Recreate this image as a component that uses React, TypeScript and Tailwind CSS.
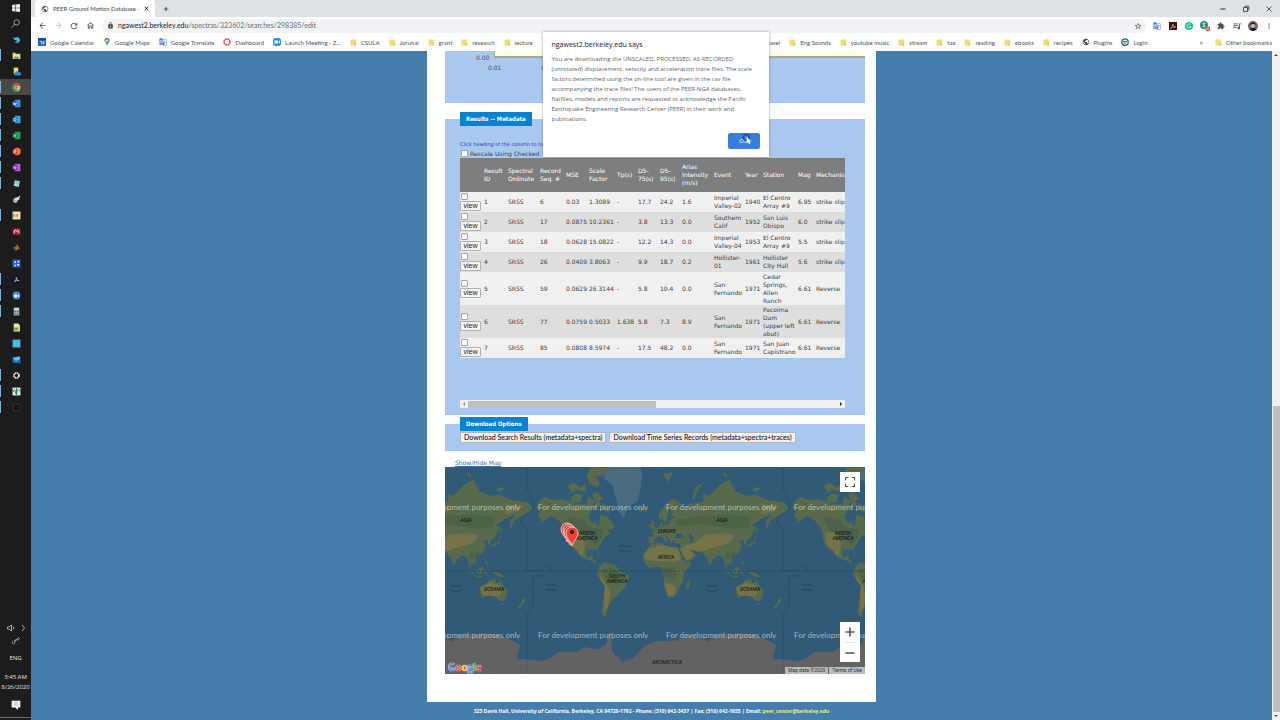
import type { ReactNode } from "react";
import {
  MdAdd,
  MdArrowBack,
  MdArrowForward,
  MdClose,
  MdExtension,
  MdGTranslate,
  MdLock,
  MdMoreVert,
  MdOutlineHome,
  MdPublic,
  MdQueueMusic,
  MdRefresh,
  MdStarBorder,
} from "react-icons/md";

/* ---------- taskbar ---------- */

type Task = { name: string; icon: ReactNode; open?: boolean; active?: boolean };

function Tile({ color, side, children }: { color: string; side?: string; children?: ReactNode }) {
  return (
    <>
      <rect x="5" y="1.5" width="10" height="13" rx="1" fill={side ?? color} />
      <rect x="1" y="4" width="8.5" height="8.5" rx="1" fill={color} />
      <g stroke="#fff" strokeWidth="1.2" fill="none">
        {children}
      </g>
    </>
  );
}

const tasks: Task[] = [
  {
    name: "Bird",
    icon: <path d="M1 4c4 2 5 0 8 0 4 0 6 3 5 6-1 4-6 5-11 3 4 0 6-1 6-3C6 10 3 8 1 4z" fill="#4fb3e8" />,
  },
  {
    name: "File Explorer",
    open: true,
    icon: (
      <>
        <path d="M1 3h5l1 2h8v9H1z" fill="#e8b640" />
        <path d="M2 6h12v7H2z" fill="#fbe08a" />
        <path d="M4 10h8v4H4z" fill="#4a9bd8" />
      </>
    ),
  },
  {
    name: "OneDrive Files",
    icon: (
      <>
        <path d="M3 1h8v11H3z" fill="#f4d35e" />
        <path d="M5 15a3 3 0 0 1 0-5 4 4 0 0 1 7-1 3 3 0 0 1 2 6z" fill="#1e8fe0" />
      </>
    ),
  },
  {
    name: "Chrome",
    open: true,
    active: true,
    icon: (
      <>
        <circle cx="8" cy="8" r="7" fill="#e5b62c" />
        <path d="M8 8 2 4.500A7 7 0 0 1 14 4.500z" fill="#d9473b" />
        <path d="M8 8 2 4.500A7 7 0 0 0 8 15l3-6z" fill="#3c9a52" />
        <circle cx="8" cy="8" r="3.200" fill="#fff" />
        <circle cx="8" cy="8" r="2.400" fill="#4285f4" />
      </>
    ),
  },
  {
    name: "Word",
    open: true,
    icon: (
      <Tile color="#1d5fc4" side="#3f8ee8">
        <path d="m2.500 6 1.300 4.500L5.200 7l1.400 3.500L8 6" />
      </Tile>
    ),
  },
  {
    name: "Outlook",
    open: true,
    icon: (
      <Tile color="#0f6cbd" side="#38a9ea">
        <circle cx="5.300" cy="8.300" r="2.200" />
      </Tile>
    ),
  },
  {
    name: "Excel",
    open: true,
    icon: (
      <Tile color="#107c41" side="#21a366">
        <path d="m3.300 6 4 4.600m0-4.600-4 4.600" />
      </Tile>
    ),
  },
  {
    name: "PowerPoint",
    open: true,
    icon: (
      <>
        <circle cx="9" cy="8" r="6.500" fill="#ee7850" />
        <rect x="1" y="4" width="8.500" height="8.500" rx="1" fill="#c43e1c" />
        <path d="M4 11V6h2a1.500 1.500 0 0 1 0 3H4" stroke="#fff" strokeWidth="1.200" fill="none" />
      </>
    ),
  },
  {
    name: "OneNote",
    open: true,
    icon: (
      <Tile color="#7719aa" side="#b45cdc">
        <path d="M3.500 10.500V6l3.500 4.500V6" />
      </Tile>
    ),
  },
  {
    name: "Notepad",
    open: true,
    icon: (
      <>
        <path d="m5 2 9 2-2 10-9-2z" fill="#a8dbe2" />
        <path d="m6 5 6 1M5.500 8l6 1" stroke="#4e8f9b" />
      </>
    ),
  },
  {
    name: "Paint",
    icon: (
      <>
        <path d="M2 10c0-4 4-6 8-6 4 0 5 4 1 5-2 0-1 2-2 4-3 2-7 0-7-3z" fill="#ccc8c0" />
        <path d="m8 8 6-6" stroke="#e8e8e8" strokeWidth="2" />
        <circle cx="5" cy="10" r="1" fill="#777" />
      </>
    ),
  },
  {
    name: "MathType",
    open: true,
    icon: (
      <>
        <rect x="1" y="1" width="14" height="14" fill="#f3e5b4" />
        <path d="M3 12V5l4 5 3-5v7" stroke="#a8842b" strokeWidth="1.500" fill="none" />
      </>
    ),
  },
  {
    name: "Mendeley",
    icon: (
      <>
        <rect x="1" y="2" width="14" height="12" rx="1" fill="#a51d36" />
        <path d="M4 11V7c1-2 3-2 4 1 1-3 3-3 4-1v4" stroke="#fff" strokeWidth="1.600" fill="none" />
      </>
    ),
  },
  {
    name: "MATLAB",
    icon: (
      <>
        <path d="m1 9 4-2 4-5-3 9z" fill="#3d7ab5" />
        <path d="M9 2c2 1 3 7 6 10l-4-2-4 4-2-2c3-2 3-7 4-10z" fill="#d9622b" />
      </>
    ),
  },
  {
    name: "Diagram",
    icon: (
      <>
        <rect x="1" y="1" width="14" height="14" fill="#2159d1" />
        <path d="M4 4h3v3H4zM10 3h3v3h-3zM4 10h3v3H4zM9 9h4v3H9z" fill="#e2ecff" />
      </>
    ),
  },
  {
    name: "Acrobat",
    open: true,
    icon: (
      <>
        <rect x="1" y="1" width="14" height="14" fill="#101828" />
        <path d="M4 12c3-2 4-5 3.500-8 1 4 2 6 5 6-3-.500-6 0-8.500 2z" stroke="#fff" fill="none" />
      </>
    ),
  },
  {
    name: "Zoom",
    open: true,
    icon: (
      <>
        <circle cx="8" cy="8" r="7" fill="#3f8cf0" />
        <path d="M4 6h5v5H4zM10 7.500l2.500-1.500v5L10 9.500z" fill="#fff" />
      </>
    ),
  },
  {
    name: "Calculator",
    open: true,
    icon: (
      <>
        <path d="M3 1h10v14H3z" fill="#9aa9b5" />
        <path d="M4 2h8v3H4z" fill="#dfe7ec" />
        <path d="M5 7h2v2H5zM9 7h2v2H9zM5 11h2v2H5zM9 11h2v2H9z" fill="#3f5463" />
      </>
    ),
  },
  {
    name: "Notes",
    icon: (
      <>
        <path d="M3 1h8l3 3v11H3z" fill="#d7e8b0" />
        <path d="M4 8h7v5H4z" fill="#6ca52e" />
      </>
    ),
  },
  { name: "Sticky", icon: <rect x="1" y="1" width="14" height="14" fill="#49b6e4" /> },
  {
    name: "Mail",
    icon: (
      <>
        <path d="M1 5h14v9H1z" fill="#1374c8" />
        <path d="m1 5 13-3v5L7 11z" fill="#69b9f2" />
      </>
    ),
  },
  {
    name: "Settings",
    open: true,
    icon: <circle cx="8" cy="8" r="4.500" fill="none" stroke="#f2f2f2" strokeWidth="3" strokeDasharray="2.800 0.730" />,
  },
  {
    name: "Plots",
    open: true,
    icon: (
      <>
        <rect x="1" y="1" width="14" height="14" fill="#dcefe2" />
        <path d="M2 9c2-6 3-6 4 0s2 5 3-1 3-4 5 0M8 2v12" stroke="#1f6b42" strokeWidth="1.500" fill="none" />
      </>
    ),
  },
  {
    name: "Console",
    open: true,
    icon: <rect x="2" y="2" width="12" height="12" rx="1" fill="#151515" stroke="#4a4a4a" />,
  },
];

function Taskbar() {
  return (
    <aside className="flex w-[31px] shrink-0 flex-col items-center bg-[#1c1c1c] font-['Open_Sans',sans-serif] text-[6px] leading-[10px] text-[#e4e4e4]">
      <button aria-label="Start" className="flex h-[15px] w-full items-center justify-center">
        <svg viewBox="0 0 16 16" className="size-2" fill="#f2f2f2">
          <path d="M0 2.200 7 1v6.500H0zM8 .9 16 0v7.500H8zM0 8.500h7V15l-7-1.200zM8 8.500h8V16l-8-.9z" />
        </svg>
      </button>
      <button aria-label="Search" className="flex h-4 w-full items-center justify-center">
        <svg viewBox="0 0 16 16" className="size-[9px]" fill="none" stroke="#c8c8c8" strokeWidth="1.300">
          <circle cx="10" cy="6" r="4.800" />
          <path d="m6.500 9.500-5.500 6" />
        </svg>
      </button>
      {tasks.map((t) => (
        <button
          key={t.name}
          aria-label={t.name}
          className={`flex h-4 w-full items-center ${t.active ? "bg-[#484848]" : ""}`}
        >
          <span className={`h-3 w-px ${t.open ? "bg-[#7db4dc]" : ""}`} />
          <span className="flex flex-1 justify-center">
            <svg viewBox="0 0 16 16" className="size-[9px]">
              {t.icon}
            </svg>
          </span>
        </button>
      ))}
      <div className="mt-auto flex w-full flex-col items-center">
        <svg viewBox="0 0 60 24" className="h-3 w-[30px]" fill="none" stroke="#b8b8b8" strokeWidth="1.800">
          <path d="M13 10h3l5-4v12l-5-4h-3zM24 9c2 2 2 4 0 6" />
          <path d="m42 6 5 6-5 6" />
        </svg>
        <svg viewBox="0 0 16 16" className="mt-[2px] size-[9px]" fill="none" stroke="#b8b8b8" strokeWidth="1.400">
          <path d="m6 10 8-8M4 9a2.500 2.500 0 1 0 3 3L7 7h6l2-3" />
        </svg>
        <span className="mt-2">ENG</span>
        <span className="mt-[9px]">3:45 AM</span>
        <span>8/26/2020</span>
        <svg viewBox="0 0 16 16" className="mt-2 size-[10px]" fill="#f5f5f5">
          <path d="M1 1h14v11h-4v4l-4-4H1z" />
          <path d="M4 5h8M4 8h8" stroke="#999" />
        </svg>
        <div className="mt-[7px] mb-[2px] h-px w-full bg-[#6a6a6a]" />
      </div>
    </aside>
  );
}

/* ---------- browser chrome ---------- */

function TabStrip() {
  return (
    <div className="flex h-[17px] items-center bg-[#dee1e6] pl-1">
      <div className="flex h-full w-[120px] items-center rounded-t-[3px] bg-white pr-[5px] pl-[6px]">
        <MdPublic className="size-2 text-[#5a5e63]" />
        <span className="ml-1 flex-1 overflow-hidden font-[Lato,sans-serif] text-[6px] whitespace-nowrap text-[#45494d]">
          PEER Ground Motion Database -
        </span>
        <button aria-label="Close tab">
          <MdClose className="size-[7px]" />
        </button>
      </div>
      <button aria-label="New tab" className="ml-[7px]">
        <MdAdd className="size-2" />
      </button>
      <div className="mr-[7px] ml-auto flex items-center gap-[15px] text-[#333]">
        <button aria-label="Minimize">
          <svg viewBox="0 0 8 8" className="size-2" fill="none" stroke="currentColor">
            <path d="M1.500 4h5" />
          </svg>
        </button>
        <button aria-label="Restore">
          <svg viewBox="0 0 8 8" className="size-2" fill="none" stroke="currentColor" strokeWidth=".8">
            <path d="M1.500 2.500h4v4h-4zM3 2.500V1.200h3.700V5H5.500" />
          </svg>
        </button>
        <button aria-label="Close">
          <svg viewBox="0 0 8 8" className="size-2" fill="none" stroke="currentColor" strokeWidth=".8">
            <path d="m1.500 1.500 5 5m0-5-5 5" />
          </svg>
        </button>
      </div>
    </div>
  );
}

function ToolButton({ label, children }: { label: string; children: ReactNode }) {
  return (
    <button aria-label={label} className="flex w-4 shrink-0 items-center justify-center">
      {children}
    </button>
  );
}

function Toolbar() {
  return (
    <div className="flex h-[17px] items-center bg-white pr-[3px] pl-[3px] text-[#4a4d51]">
      <ToolButton label="Back">
        <MdArrowBack className="size-[9px]" />
      </ToolButton>
      <ToolButton label="Forward">
        <MdArrowForward className="size-[9px] text-[#b4b7ba]" />
      </ToolButton>
      <ToolButton label="Reload">
        <MdRefresh className="size-[10px]" />
      </ToolButton>
      <ToolButton label="Home">
        <MdOutlineHome className="size-[9px]" />
      </ToolButton>
      <div className="mr-[3px] ml-1 flex h-[14px] flex-1 items-center rounded-full bg-[#f1f3f4] pl-[5px]">
        <MdLock className="size-[7px]" />
        <span className="ml-1 flex-1 font-[Lato,sans-serif] text-[7px] text-[#6a6e72]">
          <span className="text-[#1f2226]">ngawest2.berkeley.edu</span>/spectras/323602/searches/298385/edit
        </span>
        <ToolButton label="Bookmark">
          <MdStarBorder className="size-2" />
        </ToolButton>
      </div>
      <ToolButton label="Translate">
        <MdGTranslate className="size-2 text-[#4a80dc]" />
      </ToolButton>
      <ToolButton label="PDF">
        <svg viewBox="0 0 16 16" className="size-2">
          <rect width="16" height="16" fill="#47110d" />
          <path d="M3 13c4-3 5-6 4.500-9 1 4 2 6 6 6-4-.500-7 .500-10.500 3z" stroke="#fff" fill="none" />
        </svg>
      </ToolButton>
      <ToolButton label="Grammar">
        <svg viewBox="0 0 16 16" className="size-2">
          <circle cx="8" cy="8" r="8" fill="#15c39a" />
          <path d="M11 5a4 4 0 1 0 1 4H9" stroke="#fff" strokeWidth="1.500" fill="none" />
        </svg>
      </ToolButton>
      <ToolButton label="Shopping">
        <svg viewBox="0 0 20 20" className="size-[10px]">
          <circle cx="8" cy="8" r="8" fill="#178b7c" />
          <path d="M11 5c-6-3-7 2-3 3s2 5-3 3" stroke="#fff" strokeWidth="2" fill="none" />
          <rect x="11" y="11" width="9" height="9" rx="2" fill="#dd4b43" />
          <path d="M14 13.500h3v4h-3z" stroke="#fff" fill="none" />
        </svg>
      </ToolButton>
      <ToolButton label="Extensions">
        <MdExtension className="size-2" />
      </ToolButton>
      <ToolButton label="Playlist">
        <MdQueueMusic className="size-[10px]" />
      </ToolButton>
      <ToolButton label="Profile">
        <svg viewBox="0 0 20 20" className="size-[10px]">
          <circle cx="10" cy="10" r="10" fill="#6e6a68" />
          <path d="M3 17c1-4 13-4 14 0a10 10 0 0 1-14 0z" fill="#1d1d20" />
          <ellipse cx="10" cy="9" rx="4" ry="5" fill="#d9b39a" />
          <path d="M5 8c0-7 10-7 10 0-2-3-8-3-10 0z" fill="#1c1512" />
        </svg>
      </ToolButton>
      <ToolButton label="Menu">
        <MdMoreVert className="size-2" />
      </ToolButton>
    </div>
  );
}

function Folder() {
  return (
    <svg viewBox="0 0 8 8" className="h-[7px] w-[7px] shrink-0">
      <rect x=".500" y=".500" width="6.500" height="7" rx=".600" fill="#f9d975" />
      <path d="M5 4.500h2v3H5z" fill="#efc64f" />
    </svg>
  );
}

const calendarIcon = (
  <svg viewBox="0 0 16 16" className="size-2">
    <rect width="16" height="16" rx="1" fill="#2b5fc9" />
    <path d="M0 0h16v4H0z" fill="#1c47a0" />
    <path d="M4 7h3v5M10 7h2v5h-2z" stroke="#fff" strokeWidth="1.300" fill="none" />
  </svg>
);

const mapsIcon = (
  <svg viewBox="0 0 16 16" className="size-2">
    <path d="M8 16C7 11 3 9 3 5a5 5 0 0 1 10 0c0 4-4 6-5 11z" fill="#34a853" />
    <path d="M8 0a5 5 0 0 0-5 5l5 0z" fill="#ea4335" />
    <path d="M8 0a5 5 0 0 1 5 5l-5 0z" fill="#4285f4" />
    <path d="M3 5c0 2 1 3 2 5l4-5z" fill="#fbbc04" />
    <circle cx="8" cy="5" r="1.800" fill="#fff" />
  </svg>
);

const dashboardIcon = (
  <svg viewBox="0 0 16 16" className="size-2">
    <circle cx="8" cy="8" r="6" fill="none" stroke="#d9383a" strokeWidth="3" strokeDasharray="3.500 1.200" />
  </svg>
);

const zoomIcon = (
  <svg viewBox="0 0 16 16" className="size-2">
    <rect width="16" height="16" rx="5" fill="#2d8cff" />
    <path d="M3 5h7v6H3zM11 7l3-2v6l-3-2z" fill="#fff" />
  </svg>
);

const loginIcon = (
  <svg viewBox="0 0 16 16" className="size-2">
    <circle cx="8" cy="8" r="6.500" fill="#e3efd9" stroke="#2c6a78" strokeWidth="2.500" />
    <path d="M4 7h8M8 7v5" stroke="#3d8a4a" strokeWidth="2" />
  </svg>
);

function Bookmark({ label, icon }: { label: string; icon?: ReactNode }) {
  return (
    <a href="#" className="flex shrink-0 items-center gap-1">
      {icon ?? <Folder />}
      {label}
    </a>
  );
}

function BookmarksBar() {
  return (
    <nav className="flex h-[17px] items-center bg-white pr-2 pb-px pl-[7px] font-[Lato,sans-serif] text-[6px] whitespace-nowrap text-[#4d5156]">
      <div className="flex gap-[9px]">
        <Bookmark label="Google Calendar" icon={calendarIcon} />
        <Bookmark label="Google Maps" icon={mapsIcon} />
        <Bookmark label="Google Translate" icon={<MdGTranslate className="size-2 text-[#4a80dc]" />} />
        <Bookmark label="Dashboard" icon={dashboardIcon} />
        <Bookmark label="Launch Meeting - Z..." icon={zoomIcon} />
        {["CSULA", "Jorunal", "grant", "research", "lecture"].map((b) => (
          <Bookmark key={b} label={b} />
        ))}
      </div>
      <div className="ml-auto flex gap-[9px]">
        {["travel", "Eng Sounds", "youtube music", "stream", "tax", "reading", "ebooks", "recipes"].map((b) => (
          <Bookmark key={b} label={b} />
        ))}
        <Bookmark label="Plugins" icon={<MdPublic className="size-2 text-[#3c4043]" />} />
        <Bookmark label="Login" icon={loginIcon} />
      </div>
      <button aria-label="More bookmarks" className="ml-[52px] text-[8px]">
        »
      </button>
      <div className="ml-3">
        <Bookmark label="Other bookmarks" />
      </div>
    </nav>
  );
}

function AlertDialog() {
  return (
    <div
      role="alertdialog"
      aria-labelledby="alert-title"
      className="absolute top-8 left-1/2 flex h-[125px] w-[226px] -translate-x-1/2 flex-col bg-white px-[9px] pt-2 pb-2 shadow-[0_0_3px_rgba(0,0,0,0.35)]"
    >
      <h2 id="alert-title" className="text-[7px] leading-[10px] text-[#202124]">
        ngawest2.berkeley.edu says
      </h2>
      <p className="mt-1 text-[6px] leading-[10px] whitespace-nowrap text-[#5f6368]">
        You are downloading the UNSCALED, PROCESSED, AS-RECORDED
        <br />
        (unrotated) displacement, velocity and acceleration trace files. The scale
        <br />
        factors determined using the on-line tool are given in the csv file
        <br />
        accompanying the trace files! The users of the PEER-NGA databases,
        <br />
        flatfiles, models and reports are requested to acknowledge the Pacific
        <br />
        Earthquake Engineering Research Center (PEER) in their work and
        <br />
        publications.
      </p>
      <button className="relative mt-auto h-4 w-8 self-end rounded-[2px] bg-[#3b7ddd] text-[6px] text-white">
        OK
        <svg viewBox="0 0 16 16" className="absolute top-0 left-[13px] size-3">
          <circle cx="7" cy="6" r="4" fill="none" stroke="#1747a6" strokeWidth="1.800" />
          <path d="M7.500 5v9l2-1.800L11 15l1.500-.7-1.300-2.600H14z" fill="#fff" />
        </svg>
      </button>
    </div>
  );
}

/* ---------- results ---------- */

const columns = [
  { label: "", width: 24 },
  { label: "Result ID", width: 24 },
  { label: "Spectral Ordinate", width: 32 },
  { label: "Record Seq. #", width: 26 },
  { label: "MSE", width: 23 },
  { label: "Scale Factor", width: 28 },
  { label: "Tp(s)", width: 21 },
  { label: "D5-75(s)", width: 22 },
  { label: "D5-95(s)", width: 22 },
  { label: "Arias Intensity (m/s)", width: 32 },
  { label: "Event", width: 31 },
  { label: "Year", width: 18 },
  { label: "Station", width: 35 },
  { label: "Mag", width: 18 },
  { label: "Mechanism", width: 42 },
];

const records = [
  ["1", "SRSS", "6", "0.03", "1.3089", "-", "17.7", "24.2", "1.6", "Imperial Valley-02", "1940", "El Centro Array #9", "6.95", "strike slip"],
  ["2", "SRSS", "17", "0.0875", "10.2361", "-", "3.8", "13.3", "0.0", "Southern Calif", "1952", "San Luis Obispo", "6.0", "strike slip"],
  ["3", "SRSS", "18", "0.0628", "15.0822", "-", "12.2", "14.3", "0.0", "Imperial Valley-04", "1953", "El Centro Array #9", "5.5", "strike slip"],
  ["4", "SRSS", "26", "0.0409", "3.8063", "-", "9.9", "18.7", "0.2", "Hollister-01", "1961", "Hollister City Hall", "5.6", "strike slip"],
  ["5", "SRSS", "59", "0.0629", "26.3144", "-", "5.8", "10.4", "0.0", "San Fernando", "1971", "Cedar Springs, Allen Ranch", "6.61", "Reverse"],
  ["6", "SRSS", "77", "0.0759", "0.5033", "1.638", "5.8", "7.3", "8.9", "San Fernando", "1971", "Pacoima Dam (upper left abut)", "6.61", "Reverse"],
  ["7", "SRSS", "85", "0.0808", "8.5974", "-", "17.5", "48.2", "0.0", "San Fernando", "1971", "San Juan Capistrano", "6.61", "Reverse"],
];

function ResultsTable() {
  return (
    <div className="overflow-hidden">
      <table className="w-[398px] table-fixed text-left text-[6px] leading-[8px] text-[#3c3c3c]">
        <colgroup>
          {columns.map((c) => (
            <col key={c.label} style={{ width: c.width }} />
          ))}
        </colgroup>
        <thead>
          <tr className="h-[34px] bg-[#7e7e7e] text-white">
            {columns.map((c) => (
              <th key={c.label} className="p-0 font-normal">
                {c.label.startsWith("D5") ? (
                  <>
                    D5-
                    <br />
                    {c.label.slice(3)}
                  </>
                ) : (
                  c.label
                )}
              </th>
            ))}
          </tr>
        </thead>
        <tbody>
          {records.map((r) => (
            <tr key={r[0]} className={`${r[11].length > 20 ? "h-[33px]" : "h-5"} odd:bg-[#f0f0f0] even:bg-[#dedede]`}>
              <td className="p-0">
                <div className="flex flex-col items-start gap-px">
                  <input
                    type="checkbox"
                    aria-label={`Select result ${r[0]}`}
                    className="ml-px size-[7px] appearance-none rounded-[1px] border border-[#a4a4a4] bg-white"
                  />
                  <button className="h-[10px] w-[21px] rounded-[1px] border border-[#b0b0b0] bg-[#f4f4f4] font-['Liberation_Sans',sans-serif] text-[7px] leading-[8px] text-[#222]">
                    view
                  </button>
                </div>
              </td>
              {r.map((v, i) => (
                <td key={i} className="p-0">
                  {v}
                </td>
              ))}
            </tr>
          ))}
        </tbody>
      </table>
    </div>
  );
}

function Section({ title, className, children }: { title: string; className: string; children: ReactNode }) {
  return (
    <fieldset className={`min-w-0 bg-[#a9c8f0] pr-5 pl-[15px] ${className}`}>
      <legend className="h-[14px] bg-[#0a82d2] px-[6px] font-['DejaVu_Sans_Condensed','DejaVu_Sans',sans-serif] text-[6px] leading-[14px] font-bold text-white">
        {title}
      </legend>
      {children}
    </fieldset>
  );
}

/* ---------- map ---------- */

type LonLat = [number, number];

// zoom 0 world: 256px per 360 degrees, Greenwich at x=210, equator at y=104
function project([lon, lat]: LonLat) {
  const x = 210 + (lon * 256) / 360;
  const y = 104 - 40.74 * Math.log(Math.tan(Math.PI / 4 + (lat * Math.PI) / 360));
  return `${x.toFixed(1)} ${y.toFixed(1)}`;
}

const shape = (pts: LonLat[]) => `M${pts.map(project).join("L")}Z`;

const land: LonLat[][] = [
  // north america
  [[-168, 66], [-162, 70], [-156, 71.500], [-141, 70], [-128, 70.500], [-115, 68.500], [-108, 68], [-96, 68], [-94, 72], [-86, 69.500], [-82, 69], [-86, 66], [-94, 61], [-92, 57], [-82, 55], [-80, 51.500], [-78, 55], [-77, 62], [-70, 61], [-65, 59], [-56, 53], [-60, 50], [-66, 50], [-64, 46], [-70, 43], [-74, 40], [-76, 35], [-81, 31], [-80, 25.500], [-83, 29], [-90, 29.500], [-97, 27], [-97, 21], [-94, 18], [-90, 21], [-87, 21], [-88, 16], [-83, 15], [-83, 10], [-77, 8.500], [-80, 7.500], [-87, 13], [-95, 16], [-105, 20], [-109, 26], [-114, 31], [-110, 23], [-117, 32], [-122, 36.500], [-124, 42], [-124, 48], [-130, 54], [-137, 58.500], [-147, 61], [-154, 58], [-164, 54.500], [-158, 58], [-165, 61], [-162, 64]],
  // arctic islands
  [[-90, 64], [-82, 66], [-72, 68], [-63, 66], [-65, 62.500], [-74, 65], [-78, 70], [-72, 71], [-82, 73.500], [-89, 73], [-84, 70]],
  [[-118, 69], [-104, 69], [-102, 72.500], [-112, 73], [-118, 71.500]],
  [[-125, 72], [-118, 73.500], [-122, 76], [-115, 77], [-104, 75.500], [-98, 76.500], [-96, 73.500], [-110, 74.500]],
  [[-92, 76.500], [-80, 75.500], [-78, 77], [-84, 79], [-72, 79], [-64, 81], [-90, 81], [-96, 79]],
  // cuba and hispaniola
  [[-84, 22], [-77, 21], [-70, 19], [-74, 19], [-80, 23]],
  // south america
  [[-77, 8], [-72, 12], [-62, 10.500], [-52, 5], [-50, 0], [-44, -3], [-35, -6], [-39, -14], [-41, -22], [-48, -27], [-54, -34], [-58, -35], [-62, -40], [-65, -43], [-67, -48], [-69, -52], [-67, -55], [-73, -53], [-75, -47], [-73, -40], [-71, -30], [-70, -19], [-76, -14], [-81, -6], [-80, 0]],
  // africa
  [[-17, 15], [-16, 23], [-10, 30], [-6, 35.500], [10, 37], [11, 33.500], [20, 31], [24, 32], [33, 31], [36, 23], [39, 16], [43, 12], [51, 12], [48, 5], [41, -2], [39, -8], [40, -15], [35, -21], [32, -28], [27, -34], [19, -35], [15, -27], [12, -17], [13, -7], [9, -1], [9, 4], [4, 6], [-8, 4.500], [-13, 9]],
  [[44, -25], [44, -17], [49, -12.500], [50, -16], [47, -25]],
  // eurasia
  [[-9, 37], [-9, 43], [-2, 43.500], [-4, 48], [2, 51], [8, 54], [8, 57], [11, 56], [11, 54], [20, 55], [23, 59], [30, 60], [22, 61], [25, 65], [21, 65], [17, 61], [16, 57], [13, 56], [11, 59], [6, 58.500], [5, 62], [14, 68], [25, 71], [41, 67], [34, 65], [44, 66], [46, 68], [60, 69], [68, 69], [68, 73], [74, 72], [80, 73], [88, 75.500], [104, 78], [113, 74], [128, 72], [140, 72.500], [160, 70], [180, 69], [189, 66], [180, 63], [170, 60], [163, 58], [157, 51], [156, 57], [163, 62], [150, 59], [136, 54], [141, 52], [135, 43], [128, 39], [129, 35], [126, 35], [124, 40], [118, 39], [122, 36], [121, 30], [117, 24], [108, 21], [109, 13], [105, 9], [100, 13], [103, 2], [98, 9], [97, 17], [91, 22], [86, 20], [80, 15], [79, 8], [75, 12], [72, 20], [67, 25], [57, 26], [50, 30], [48, 30], [52, 24], [59, 22], [54, 17], [44, 12.500], [39, 21], [35, 29], [36, 36], [28, 36.500], [26, 40], [22, 37], [19, 42], [13, 45.500], [18, 40], [16, 38], [8, 44], [3, 43], [-1, 38], [-5, 36]],
  // islands round europe and asia
  [[-5, 50], [1, 51], [0, 53], [-2, 57], [-5, 58.500], [-5, 54]],
  [[-10, 52], [-6, 52.500], [-6, 55], [-9, 54]],
  [[-24, 65.500], [-14, 66.500], [-14, 64.500], [-21, 63.500]],
  [[12, 79.500], [26, 80], [18, 77]],
  [[52, 71], [58, 75.500], [68, 77], [58, 73], [56, 70.500]],
  [[95, 80], [104, 79], [98, 78.500]],
  [[137, 75.500], [150, 75], [141, 73.500]],
  [[130, 32], [137, 34], [141, 36], [141, 42], [145, 43], [142, 45.500], [139, 38], [132, 35]],
  [[142, 46], [144, 50], [142, 54]],
  [[95, 5.500], [104, -2], [106, -6], [101, -2.500]],
  [[109, 1], [117, 7], [119, 2], [116, -4], [110, -3]],
  [[105, -6.500], [114, -7], [120, -9], [108, -8]],
  [[119, -1], [125, 1.500], [122, -5]],
  [[120, 18], [122, 17], [126, 7], [122, 11]],
  [[131, -1], [141, -2.500], [150, -9], [142, -9], [134, -4]],
  // australia and new zealand
  [[114, -22], [122, -18], [127, -14], [131, -12], [136, -12], [135, -15], [140, -17.500], [142, -11], [146, -19], [153, -26], [151, -34], [147, -39], [140, -38], [135, -33], [130, -32], [123, -34], [115, -34.500]],
  [[145, -41], [148, -41], [147, -43.500]],
  [[173, -35], [178, -38], [175, -41.500], [172, -44], [168, -47], [167, -45.500], [173, -41]],
];

const dry: LonLat[][] = [
  [[-16, 17], [-15, 24], [-9, 30], [10, 35], [32, 30], [37, 18], [30, 13], [0, 14]],
  [[13, -17], [18, -33], [27, -32], [29, -22], [20, -17]],
  [[40, 20], [37, 30], [46, 35], [57, 37], [70, 45], [92, 47], [112, 45], [104, 36], [80, 31], [72, 28], [60, 27], [50, 29], [56, 22], [46, 15]],
  [[114, -23], [127, -16], [140, -19], [146, -26], [141, -34], [117, -32]],
  [[-121, 47], [-104, 48], [-99, 35], [-99, 26], [-104, 21], [-109, 27], [-119, 35]],
  [[-78, -5], [-68, -18], [-63, -30], [-66, -45], [-71, -50], [-72, -38], [-71, -20], [-77, -12]],
  [[150, 68], [175, 67], [165, 64], [150, 62]],
];

const forest: LonLat[][] = [
  [[28, 58], [60, 61], [100, 62], [135, 60], [130, 51], [100, 52], [60, 55], [30, 53]],
  [[-125, 60], [-100, 58], [-90, 52], [-72, 50], [-75, 42], [-85, 33], [-92, 42], [-115, 50]],
  [[10, 4], [28, 5], [32, -6], [28, -12], [14, -8]],
  [[-75, 2], [-60, 5], [-51, 0], [-52, -11], [-70, -9]],
  [[98, 24], [115, 27], [108, 18], [100, 14]],
];

const greenland: LonLat[] = [[-73, 78.500], [-60, 82], [-30, 83.500], [-18, 80], [-20, 75], [-24, 70], [-38, 66], [-44, 60], [-51, 64], [-54, 70], [-60, 76]];

const antarctica: LonLat[] = [[-180, -84], [-180, -77], [-160, -77.500], [-150, -77], [-135, -74.500], [-110, -74.500], [-100, -72.500], [-80, -73.500], [-68, -71], [-66, -67], [-58, -63.500], [-62, -68], [-61, -74], [-45, -78], [-30, -76.500], [-15, -72], [0, -70], [30, -69.500], [50, -66.500], [70, -69.500], [75, -70], [85, -67], [110, -66], [135, -66], [160, -69.500], [170, -72], [165, -77], [180, -77], [180, -84]];

const blotches: LonLat[][] = [
  [[48, 37], [53, 37], [54, 41], [51, 46.500], [47, 44.500], [50, 41]],
  [[28, 42], [35, 42], [41, 42], [38, 46.500], [31, 46.500]],
  [[-92, 48], [-84, 47], [-87, 42]],
];

const labels = [
  { x: 277, y: 55, lines: ["ASIA"] },
  { x: 222, y: 66, lines: ["EUROPE"] },
  { x: 221, y: 92, lines: ["AFRICA"] },
  { x: 305, y: 124, lines: ["OCEANIA"] },
  { x: 142, y: 68, lines: ["NORTH", "AMERICA"] },
  { x: 172, y: 111, lines: ["SOUTH", "AMERICA"] },
  { x: 222, y: 197, lines: ["ANTARCTICA"] },
];

const seas = [
  { x: 180, y: 80, lines: ["Atlantic", "Ocean"] },
  { x: 267, y: 120, lines: ["Indian", "Ocean"] },
  { x: 362, y: 119, lines: ["Pacific", "Ocean"] },
];

type Label = { x: number; y: number; lines: string[] };

function MapLabel({ x, y, lines }: Label) {
  return (
    <text textAnchor="middle">
      {lines.map((l, i) => (
        <tspan key={l} x={x} y={y + i * 5}>
          {l}
        </tspan>
      ))}
    </text>
  );
}

function World() {
  return (
    <>
      <path d={land.map(shape).join("")} fill="#586a4b" />
      <path d={dry.map(shape).join("")} fill="#7d7548" opacity="0.800" />
      <path d={forest.map(shape).join("")} fill="#465f45" opacity="0.700" />
      <path d={blotches.map(shape).join("")} fill="#315a77" />
      <path d={shape(greenland)} fill="#4b6b80" />
      <path d={shape(antarctica)} fill="#626262" stroke="#626262" strokeWidth=".5" />
      <path
        d="M338 0v22l7 15-2 7-7 4-5 8 7 6v42h12l3-5h7l5 11M358 109h-14v30l-6 8v60"
        fill="none"
        stroke="#24445c"
        strokeWidth=".7"
        strokeDasharray="2 1"
      />
      <g fontSize="5" fontStyle="italic" fontWeight="500" fill="#161a16">
        {labels.map((l) => (
          <MapLabel key={l.lines[0]} {...l} />
        ))}
      </g>
      <g fontSize="4" fill="#1d3d57">
        {seas.map((l) => (
          <MapLabel key={l.lines[0]} {...l} />
        ))}
      </g>
    </>
  );
}

function Pin({ x, y, fill }: { x: number; y: number; fill: string }) {
  return (
    <path
      d="M0 0C-1-5-6-8-6-13a6 6 0 0 1 12 0C6-8 1-5 0 0z"
      transform={`translate(${x} ${y})`}
      fill={fill}
      stroke="#f3bdb8"
    />
  );
}

function WorldMap() {
  return (
    <div className="relative h-[207px] overflow-hidden bg-[#315a77] font-[Roboto,sans-serif]">
      <svg viewBox="0 0 420 207" preserveAspectRatio="xMinYMin slice" className="size-full" aria-label="World map">
        {[-256, 0, 256].map((dx) => (
          <g key={dx} transform={`translate(${dx} 0)`}>
            <World />
          </g>
        ))}
        <path d="M0 104h420" stroke="#24445c" strokeWidth=".7" strokeDasharray="3 1" />
        <g fontFamily="Lato, sans-serif" fontSize="8" fill="#fff" fillOpacity="0.550">
          {[43, 171].map((y) =>
            [-35, 93, 221, 349].map((x) => (
              <text key={`${x}-${y}`} x={x} y={y}>
                For development purposes only
              </text>
            )),
          )}
        </g>
        <Pin x={122} y={75} fill="#d8453c" />
        <Pin x={124} y={76} fill="#d8453c" />
        <Pin x={125} y={78} fill="#d8453c" />
        <Pin x={127} y={79} fill="#ea4335" />
        <circle cx="127" cy="65" r="2.200" fill="#5c120d" />
      </svg>
      <button
        aria-label="Toggle fullscreen view"
        className="absolute top-[5px] right-[5px] flex size-5 items-center justify-center bg-white"
      >
        <svg viewBox="0 0 18 18" className="size-[10px]" fill="#555">
          <path d="M0 0h6v2H2v4H0zM12 0h6v6h-2V2h-4zM0 12h2v4h4v2H0zM16 12h2v6h-6v-2h4z" />
        </svg>
      </button>
      <div className="absolute right-[5px] bottom-3 flex w-5 flex-col bg-white text-[#555]">
        <button aria-label="Zoom in" className="flex h-5 items-center justify-center">
          <svg viewBox="0 0 10 10" className="size-[10px]" stroke="currentColor" strokeWidth="1.600">
            <path d="M.5 5h9M5 .5v9" />
          </svg>
        </button>
        <div className="mx-1 h-px bg-[#e6e6e6]" />
        <button aria-label="Zoom out" className="flex h-[19px] items-center justify-center">
          <svg viewBox="0 0 10 10" className="size-[10px]" stroke="currentColor" strokeWidth="1.600">
            <path d="M.5 5h9" />
          </svg>
        </button>
      </div>
      <div className="absolute bottom-px left-[3px] font-['Open_Sans',sans-serif] text-[10px] leading-[12px] font-semibold [text-shadow:0_0_1px_#fff,0_0_1px_#fff]">
        <span className="text-[#4285f4]">G</span>
        <span className="text-[#ea4335]">o</span>
        <span className="text-[#fbbc04]">o</span>
        <span className="text-[#4285f4]">g</span>
        <span className="text-[#34a853]">l</span>
        <span className="text-[#ea4335]">e</span>
      </div>
      <div className="absolute right-0 bottom-0 flex gap-px text-[5px] leading-[7px] text-[#333]">
        <span className="bg-[#b9bcbe] px-[3px]">Map data ©2020</span>
        <a href="#" className="bg-[#b9bcbe] px-[3px]">
          Terms of Use
        </a>
      </div>
    </div>
  );
}

/* ---------- page ---------- */

function HorizontalScrollbar() {
  return (
    <div className="flex h-2 items-center bg-[#f1f1f1]">
      <svg viewBox="0 0 8 8" className="size-2" fill="#8b8b8b">
        <path d="M5 2v4L3 4z" />
      </svg>
      <div className="h-[7px] w-[188px] bg-[#c1c1c1]" />
      <svg viewBox="0 0 8 8" className="ml-auto size-2" fill="#222">
        <path d="M3 2v4l2-2z" />
      </svg>
    </div>
  );
}

const downloadButton =
  "h-[11px] rounded-[1px] border border-[#b5b5b5] bg-[#f1f1f1] px-[3px] font-[Lato,sans-serif] text-[7px] leading-[9px] text-black";

function Page() {
  return (
    <main className="flex flex-1 flex-col bg-[#457ead] font-['DejaVu_Sans',sans-serif]">
      <div className="mx-auto w-full max-w-[449px] flex-1 bg-white pr-[11px] pl-[18px]">
        <div className="h-[52px] bg-[#a9c8f0] pl-[31px] text-[6px] leading-[8px] text-[#4b5563]">
          <div className="flex h-[11px]">
            <span className="w-[18px] pt-[3px]">0.00</span>
            <div className="h-[7px] flex-1 border-b-2 border-l border-[#a9a98c] bg-[#fdfde6]" />
          </div>
          <div className="flex gap-10 pt-[2px] pl-3">
            <span>0.01</span>
            <span>0.1</span>
          </div>
        </div>

        <Section title="Results -- Metadata" className="mt-[9px] h-[303px]">
          <p className="mt-[14px] text-[5px] leading-[8px] text-[#2a2ad4]">Click heading of the column to toggle sorting</p>
          <label className="mt-px mb-px flex h-2 items-center gap-[2px] pl-px text-[6px] text-[#2f3e55]">
            <input
              type="checkbox"
              className="size-[7px] appearance-none rounded-[1px] border border-[#a4a4a4] bg-white"
            />
            Rescale Using Checked
          </label>
          <ResultsTable />
          <div className="pt-[42px]">
            <HorizontalScrollbar />
          </div>
        </Section>

        <Section title="Download Options" className="mt-[2px] h-[34px]">
          <div className="flex gap-[3px] pt-px">
            <button className={downloadButton}>Download Search Results (metadata+spectra)</button>
            <button className={downloadButton}>Download Time Series Records (metadata+spectra+traces)</button>
          </div>
        </Section>

        <a href="#" className="mt-2 ml-[10px] block text-[6px] leading-[8px] text-[#3f72a8] underline">
          Show/Hide Map
        </a>
        <WorldMap />
      </div>
      <footer className="h-[18px] text-center font-['Open_Sans',sans-serif] text-[5px] leading-[18px] font-bold text-white">
        325 Davis Hall, University of California, Berkeley, CA 94720-1792 - Phone: (510) 642-3437 | Fax: (510) 642-1655 |
        Email:{" "}
        <a href="mailto:peer_center@berkeley.edu" className="text-[#e6ee7a]">
          peer_center@berkeley.edu
        </a>
      </footer>
    </main>
  );
}

export default function App() {
  return (
    <div className="flex min-h-screen">
      <Taskbar />
      <div className="relative flex min-w-0 flex-1 flex-col font-['Open_Sans',sans-serif]">
        <TabStrip />
        <Toolbar />
        <BookmarksBar />
        <div className="flex flex-1">
          <Page />
          <div className="flex w-2 flex-col items-center bg-[#f1f1f1]">
            <svg viewBox="0 0 8 8" className="size-2" fill="#555">
              <path d="M2 5h4L4 3z" />
            </svg>
            <div className="mt-auto h-[306px] w-[7px] bg-[#c1c1c1]" />
            <svg viewBox="0 0 8 8" className="size-2" fill="#555">
              <path d="M2 3h4L4 5z" />
            </svg>
          </div>
        </div>
        <AlertDialog />
      </div>
    </div>
  );
}
